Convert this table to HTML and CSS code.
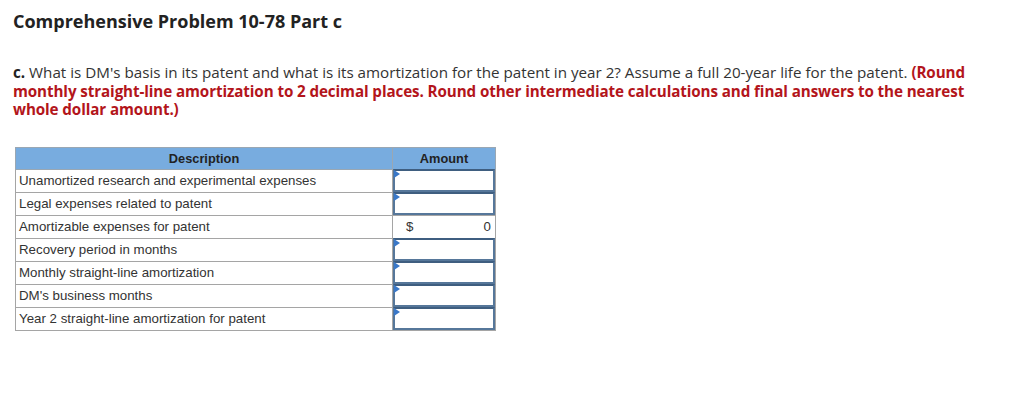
FILE: index.html
```html
<!DOCTYPE html>
<html>
<head>
<meta charset="utf-8">
<link rel="stylesheet" href="styles.css">
</head>
<body>
<h1 class="title">Comprehensive Problem 10-78 Part c</h1>
<p class="question"><b class="lead">c.</b> What is DM's basis in its patent and what is its amortization for the patent in year 2? Assume a full 20-year life for the patent. <span class="note">(Round monthly straight-line amortization to 2 decimal places. Round other intermediate calculations and final answers to the nearest whole dollar amount.)</span></p>
<table class="grid">
  <thead>
    <tr><th class="desc">Description</th><th class="amt">Amount</th></tr>
  </thead>
  <tbody>
    <tr><td class="desc">Unamortized research and experimental expenses</td><td class="amt"><div class="input"></div></td></tr>
    <tr><td class="desc">Legal expenses related to patent</td><td class="amt"><div class="input"></div></td></tr>
    <tr><td class="desc">Amortizable expenses for patent</td><td class="amt"><div class="calc"><span>$</span><span>0</span></div></td></tr>
    <tr><td class="desc">Recovery period in months</td><td class="amt"><div class="input"></div></td></tr>
    <tr><td class="desc">Monthly straight-line amortization</td><td class="amt"><div class="input"></div></td></tr>
    <tr><td class="desc">DM's business months</td><td class="amt"><div class="input"></div></td></tr>
    <tr><td class="desc">Year 2 straight-line amortization for patent</td><td class="amt"><div class="input"></div></td></tr>
  </tbody>
</table>
</body>
</html>
```
FILE: styles.css
```css
body {
  margin: 0;
  padding: 0 13px;
  background: #fff;
  font-family: "Open Sans", "Liberation Sans", sans-serif;
  color: #333;
}
.title {
  margin: 0;
  padding-top: 9px;
  font-size: 18px;
  font-weight: 700;
  color: #222;
  line-height: 24px;
}
.question {
  margin: 30px 0 0 0;
  font-size: 15.2px;
  line-height: 18.5px;
  color: #333;
  max-width: 990px;
}
.lead { color: #222; }
.note { color: #b3151b; font-weight: 700; letter-spacing: -0.1px; }
.grid {
  margin: 28px 0 0 2px;
  border-collapse: collapse;
  font-family: "Liberation Sans", Arial, sans-serif;
  font-size: 13.3px;
  color: #333;
  table-layout: fixed;
  width: 478px;
}
.grid th {
  background: #78acdf;
  height: 21px;
  padding: 0;
  font-weight: 700;
  font-size: 12.8px;
  color: #222;
  border: 1px solid #9aa7b3;
  text-align: center;
}
.grid td {
  height: 22px;
  padding: 0;
  border: 1px solid #a5a5a5;
}
.grid td.desc {
  padding-left: 3px;
}
.grid th.desc { width: 376px; }
.grid th.amt { width: 102px; }
.input {
  position: relative;
  height: 19px;
  border: 2px solid #56779a;
  border-top-color: #3f5e80;
  margin: -1px 0 0 0;
  background: #fff;
}
.input::before {
  content: "";
  position: absolute;
  left: -1px;
  top: -1px;
  border-left: 6px solid #3a78c8;
  border-top: 4px solid transparent;
  border-bottom: 4px solid transparent;
}
.calc {
  display: flex;
  justify-content: space-between;
  padding: 0 4px 0 13px;
}
```
